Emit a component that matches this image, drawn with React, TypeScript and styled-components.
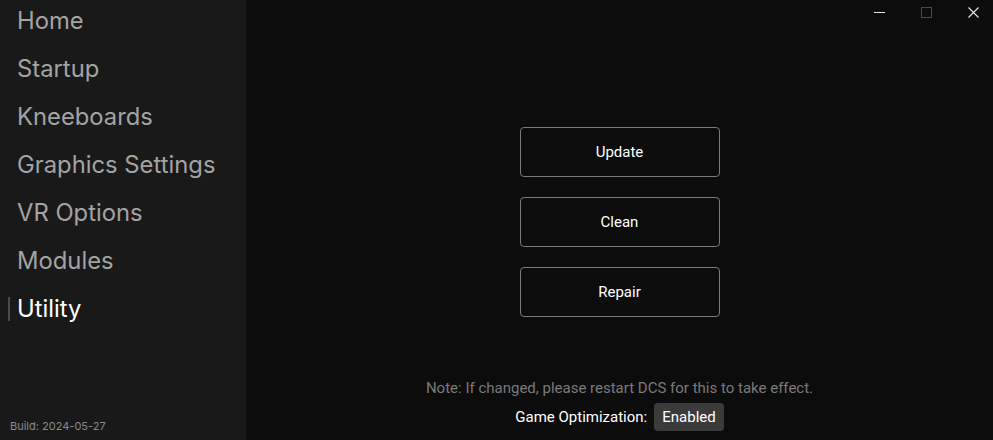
import React from "react";
import styled, { createGlobalStyle } from "styled-components";

const Global = createGlobalStyle`
  html, body { margin: 0; padding: 0; background: #0c0c0c; }
  body { font-family: Roboto, "Liberation Sans", Arial, sans-serif; }
`;

const Shell = styled.div`
  display: flex;
  width: 993px;
  height: 440px;
  overflow: hidden;
  background: #0c0c0c;
`;

const Sidebar = styled.nav`
  width: 246px;
  flex: none;
  background: #191919;
  display: flex;
  flex-direction: column;
  padding: 1px 0 7px 0;
  box-sizing: border-box;
`;

const NavList = styled.ul`
  list-style: none;
  margin: 0;
  padding: 0;
  display: flex;
  flex-direction: column;
  gap: 8px;
  flex: 1;
`;

const NavItem = styled.li<{ $active?: boolean }>`
  position: relative;
  font-family: Inter, "Noto Sans", sans-serif;
  font-size: 23.8px;
  line-height: 40px;
  padding-left: 17px;
  color: ${(p) => (p.$active ? "#ffffff" : "#a3a3a3")};
  &::before {
    content: "";
    display: ${(p) => (p.$active ? "block" : "none")};
    position: absolute;
    left: 8px;
    top: 8px;
    width: 2px;
    height: 24px;
    background: #4a4a4a;
  }
`;

const Build = styled.div`
  font-family: Inter, "Noto Sans", sans-serif;
  font-size: 11px;
  color: #8a8a8a;
  padding-left: 10px;
`;

const Main = styled.main`
  flex: 1;
  display: flex;
  flex-direction: column;
  align-items: center;
`;

const TitleBar = styled.div`
  align-self: stretch;
  height: 30px;
  display: flex;
  justify-content: flex-end;
  align-items: center;
  gap: 7px;
`;

const WinButton = styled.button`
  width: 40px;
  height: 26px;
  padding: 0;
  border: none;
  background: transparent;
  display: flex;
  align-items: center;
  justify-content: center;
  margin-top: -6px;
`;

const ActionStack = styled.div`
  margin-top: 97px;
  display: flex;
  flex-direction: column;
  gap: 20px;
`;

const ActionButton = styled.button`
  width: 200px;
  height: 50px;
  background: #0c0c0c;
  border: 1px solid #7a7a7a;
  border-radius: 4px;
  color: #ffffff;
  font-family: Roboto, "Liberation Sans", Arial, sans-serif;
  font-size: 15px;
`;

const Footer = styled.div`
  margin-top: auto;
  padding-bottom: 9px;
  display: flex;
  flex-direction: column;
  align-items: center;
  gap: 5px;
`;

const Note = styled.div`
  font-size: 15px;
  line-height: 20px;
  color: #7a7a7a;
`;

const OptRow = styled.div`
  display: flex;
  align-items: center;
  gap: 7px;
  font-size: 15px;
  color: #ffffff;
`;

const Toggle = styled.button`
  height: 28px;
  padding: 0 8px;
  border: none;
  border-radius: 4px;
  background: #3b3b3b;
  color: #ffffff;
  font-family: Roboto, "Liberation Sans", Arial, sans-serif;
  font-size: 15px;
`;

const items = ["Home", "Startup", "Kneeboards", "Graphics Settings", "VR Options", "Modules", "Utility"];

export default function App() {
  return (
    <>
      <Global />
      <Shell>
        <Sidebar>
          <NavList>
            {items.map((t) => (
              <NavItem key={t} $active={t === "Utility"}>
                {t}
              </NavItem>
            ))}
          </NavList>
          <Build>Build: 2024-05-27</Build>
        </Sidebar>
        <Main>
          <TitleBar>
            <WinButton aria-label="minimize">
              <svg width="11" height="11" viewBox="0 0 11 11">
                <line x1="0" y1="5.5" x2="11" y2="5.5" stroke="#e6e6e6" strokeWidth="1" />
              </svg>
            </WinButton>
            <WinButton aria-label="maximize">
              <svg width="11" height="11" viewBox="0 0 11 11">
                <rect x="0.5" y="0.5" width="10" height="10" fill="none" stroke="#4a4a4a" strokeWidth="1" />
              </svg>
            </WinButton>
            <WinButton aria-label="close">
              <svg width="11" height="11" viewBox="0 0 11 11">
                <path d="M0.5 0.5 L10.5 10.5 M10.5 0.5 L0.5 10.5" stroke="#e6e6e6" strokeWidth="1.1" />
              </svg>
            </WinButton>
          </TitleBar>
          <ActionStack>
            <ActionButton>Update</ActionButton>
            <ActionButton>Clean</ActionButton>
            <ActionButton>Repair</ActionButton>
          </ActionStack>
          <Footer>
            <Note>Note: If changed, please restart DCS for this to take effect.</Note>
            <OptRow>
              <span>Game Optimization:</span>
              <Toggle>Enabled</Toggle>
            </OptRow>
          </Footer>
        </Main>
      </Shell>
    </>
  );
}
